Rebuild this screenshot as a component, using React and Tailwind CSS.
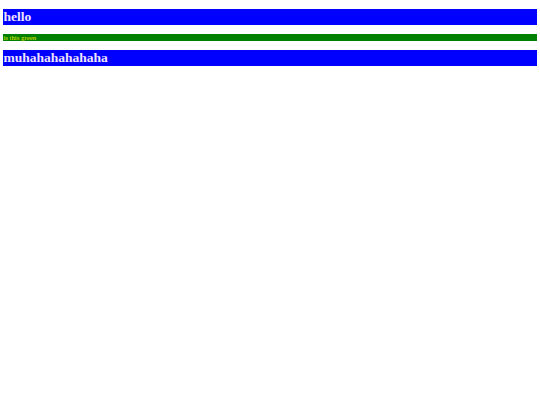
export default function App() {
  return (
    <div className="min-h-screen bg-white px-[3.4px] pt-[9px] font-['Liberation_Serif',serif]">
      <h1 className="bg-[#0000ff] text-[13.5px] leading-[15.6px] font-bold text-[#f0e4ff]">
        hello
      </h1>
      <p className="mt-[9px] bg-[#008000] text-[6.75px] leading-[7.8px] text-[#e6e600]">
        is this green
      </p>
      <h1 className="mt-[9px] bg-[#0000ff] text-[13.5px] leading-[15.6px] font-bold text-[#f0e4ff]">
        muhahahahahaha
      </h1>
    </div>
  )
}
